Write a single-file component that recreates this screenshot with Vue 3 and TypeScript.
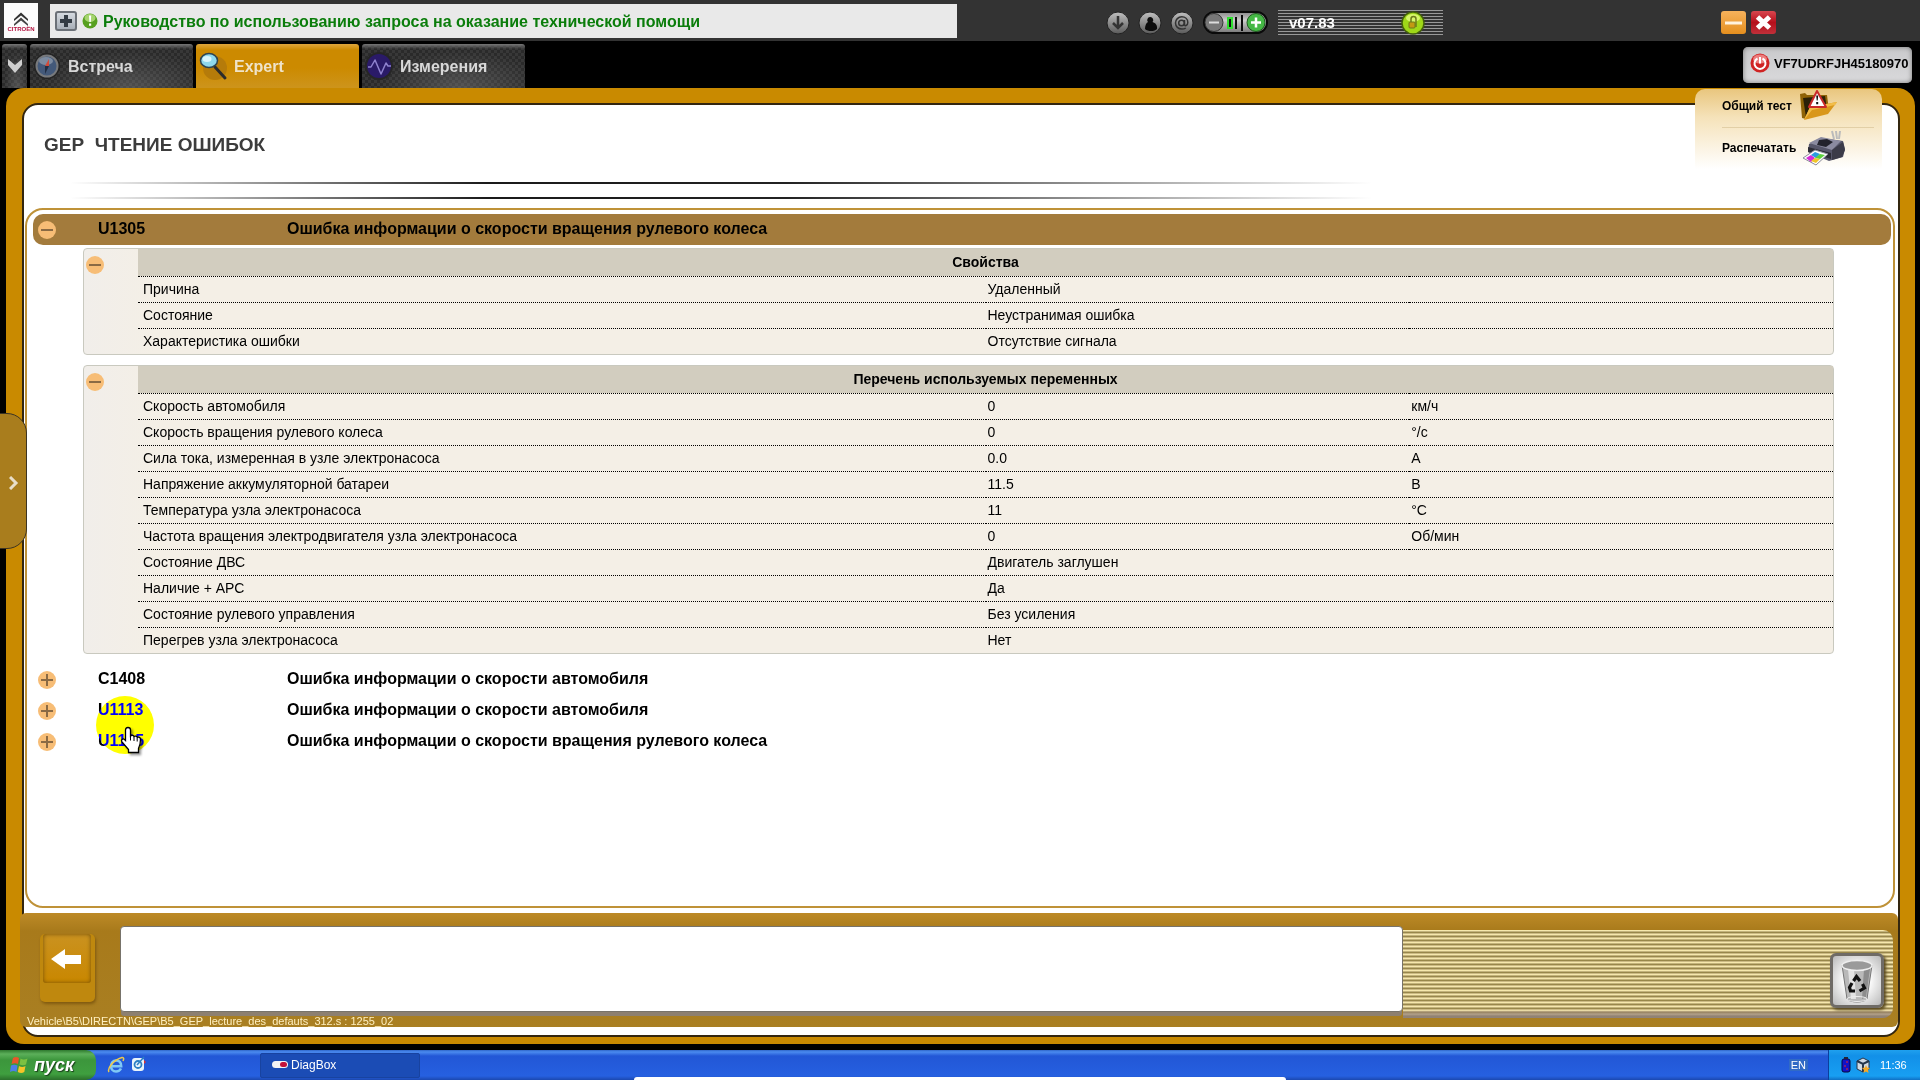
<script setup lang="ts">
import { ref } from 'vue'

interface Variable {
  name: string
  value: string
  unit?: string
}
interface Group {
  title: string
  rows: Variable[]
}
interface Fault {
  code: string
  label: string
  open: boolean
  groups: Group[]
}
type TabIcon = 'compass' | 'magnifier' | 'wave'

const tabs: { label: string; icon: TabIcon }[] = [
  { label: 'Встреча', icon: 'compass' },
  { label: 'Expert', icon: 'magnifier' },
  { label: 'Измерения', icon: 'wave' },
]
const activeTab = ref('Expert')

const faults = ref<Fault[]>([
  {
    code: 'U1305',
    label: 'Ошибка информации о скорости вращения рулевого колеса',
    open: true,
    groups: [
      {
        title: 'Свойства',
        rows: [
          { name: 'Причина', value: 'Удаленный' },
          { name: 'Состояние', value: 'Неустранимая ошибка' },
          { name: 'Характеристика ошибки', value: 'Отсутствие сигнала' },
        ],
      },
      {
        title: 'Перечень используемых переменных',
        rows: [
          { name: 'Скорость автомобиля', value: '0', unit: 'км/ч' },
          { name: 'Скорость вращения рулевого колеса', value: '0', unit: '°/с' },
          { name: 'Сила тока, измеренная в узле электронасоса', value: '0.0', unit: 'А' },
          { name: 'Напряжение аккумуляторной батареи', value: '11.5', unit: 'В' },
          { name: 'Температура узла электронасоса', value: '11', unit: '°C' },
          { name: 'Частота вращения электродвигателя узла электронасоса', value: '0', unit: 'Об/мин' },
          { name: 'Состояние ДВС', value: 'Двигатель заглушен' },
          { name: 'Наличие + АРС', value: 'Да' },
          { name: 'Состояние рулевого управления', value: 'Без усиления' },
          { name: 'Перегрев узла электронасоса', value: 'Нет' },
        ],
      },
    ],
  },
  { code: 'C1408', label: 'Ошибка информации о скорости автомобиля', open: false, groups: [] },
  { code: 'U1113', label: 'Ошибка информации о скорости автомобиля', open: false, groups: [] },
  { code: 'U1105', label: 'Ошибка информации о скорости вращения рулевого колеса', open: false, groups: [] },
])
</script>

<template>
  <div class="desktop">
    <header class="topbar">
      <div class="logo">
        <svg width="34" height="35" viewBox="0 0 34 35" aria-hidden="true">
          <path d="M10 16 L17 9.500 L24 16 L24 18 L17 12.500 L10 18 Z" fill="#333" />
          <path d="M10 21 L17 14.500 L24 21 L24 23 L17 17.500 L10 23 Z" fill="#444" />
        </svg>
        <span>CITROËN</span>
      </div>
      <div class="message">
        <button class="expand" aria-label="Развернуть">
          <svg width="14" height="14" viewBox="0 0 14 14"><path d="M5 1h4v4h4v4H9v4H5V9H1V5h4z" fill="#333b44" /></svg>
        </button>
        <svg width="16" height="16" viewBox="0 0 16 16" aria-hidden="true">
          <circle cx="8" cy="8" r="7.500" fill="#57a01f" />
          <ellipse cx="8" cy="5" rx="5.500" ry="4" fill="#a5d46e" />
          <path d="M7 2.500h2.200L8.800 9H7.400zM7 10.500h2.200v2.200H7z" fill="#fff" />
        </svg>
        <a href="#">Руководство по использованию запроса на оказание технической помощи</a>
      </div>
      <div class="status">
        <button class="ball" aria-label="Загрузка">
          <svg width="24" height="24" viewBox="0 0 24 24">
            <circle cx="12" cy="12" r="11" fill="url(#grey)" stroke="#222" />
            <path d="M12 5v11M7 12l5 5 5-5" fill="none" stroke="#333" stroke-width="2.500" />
          </svg>
        </button>
        <button class="ball" aria-label="Пользователь">
          <svg width="24" height="24" viewBox="0 0 24 24">
            <circle cx="12" cy="12" r="11" fill="url(#grey)" stroke="#222" />
            <path d="M12 6a3 3 0 0 1 2.500 5c3 1 5 3 4.500 7-2 2.500-9 3-12 0 0-3 1-6 3-7A3 3 0 0 1 12 6z" fill="#0c0c0c" />
          </svg>
        </button>
        <button class="ball" aria-label="Почта">
          <svg width="24" height="24" viewBox="0 0 24 24">
            <circle cx="12" cy="12" r="11" fill="url(#grey)" stroke="#222" />
            <circle cx="11.500" cy="12" r="2.800" fill="none" stroke="#333" stroke-width="1.500" />
            <path d="M14.500 9v4.500c0 2 3.300 1.500 3.300-2 0-3.500-2.800-5.700-6-5.700-3.600 0-6.300 2.800-6.300 6.300s2.800 6 6.300 6c1.700 0 3-.4 4-1.100" fill="none" stroke="#333" stroke-width="1.500" />
          </svg>
        </button>
        <svg class="level" width="66" height="24" viewBox="0 0 66 24" role="img" aria-label="Уровень">
          <defs>
            <linearGradient id="grey" x1="0" y1="0" x2="0" y2="1">
              <stop offset="0" stop-color="#c0c0c0" /><stop offset="1" stop-color="#5a5a5a" />
            </linearGradient>
            <linearGradient id="silver" x1="0" y1="0" x2="0" y2="1">
              <stop offset="0" stop-color="#888" /><stop offset=".4" stop-color="#ccc" /><stop offset="1" stop-color="#777" />
            </linearGradient>
          </defs>
          <rect x="1" y="1" width="63" height="21" rx="10.500" fill="url(#silver)" stroke="#0a0a0a" stroke-width="2" />
          <circle cx="11" cy="11.500" r="9" fill="#777" stroke="#333" />
          <path d="M6 11.500h10" stroke="#ddd" stroke-width="2" />
          <rect x="25" y="7" width="4" height="10" fill="#111" stroke="#2fe02f" stroke-width="2" />
          <path d="M33 6v12M39 4v16" stroke="#0a0a0a" stroke-width="2" />
          <circle cx="53" cy="11.500" r="9" fill="#45b845" stroke="#1d5a1d" />
          <path d="M48 11.500h10M53 6.500v10" stroke="#fff" stroke-width="2.500" />
        </svg>
        <div class="version">
          <span>v07.83</span>
          <svg width="24" height="24" viewBox="0 0 24 24" aria-hidden="true">
            <circle cx="12" cy="12" r="11" fill="#9fd818" stroke="#44600c" stroke-width="1.500" />
            <ellipse cx="12" cy="7" rx="7" ry="4" fill="#d5f56a" />
            <path d="M10 11V8a2.500 2.500 0 0 1 5 0v8" fill="none" stroke="#6d7a1a" stroke-width="1.500" />
            <rect x="8" y="11" width="6" height="6" rx="1" fill="#c39a12" stroke="#6d7a1a" />
          </svg>
        </div>
      </div>
      <div class="window-buttons">
        <button class="minimize" aria-label="Свернуть">
          <svg width="25" height="23" viewBox="0 0 25 23"><path d="M4 10.500h17v3H4z" fill="#fff3df" /></svg>
        </button>
        <button class="close" aria-label="Закрыть">
          <svg width="25" height="23" viewBox="0 0 25 23"><path d="M6.500 6l12 11M18.500 6l-12 11" stroke="#fff" stroke-width="5" /></svg>
        </button>
      </div>
    </header>

    <div class="tabrow">
      <button class="tab more" aria-label="Ещё">
        <svg width="16" height="16" viewBox="0 0 16 16"><path d="M1 1l7 6 7-6v6l-7 8-7-8z" fill="#cfcfcf" /></svg>
      </button>
      <button
        v-for="tab in tabs"
        :key="tab.label"
        class="tab"
        :class="{ active: tab.label === activeTab }"
        @click="activeTab = tab.label"
      >
        <svg v-if="tab.icon === 'compass'" width="30" height="32" viewBox="0 0 30 32" aria-hidden="true">
          <circle cx="15" cy="16" r="13" fill="#242424" />
          <circle cx="15" cy="16" r="10.500" fill="#43597a" stroke="#77797c" stroke-width="2" />
          <ellipse cx="14" cy="11" rx="7" ry="4" fill="#7c8ba0" />
          <path d="M13 16l4-7v7z" fill="#d14a3a" /><path d="M17 16l-4 8v-8z" fill="#222f45" />
        </svg>
        <svg v-else-if="tab.icon === 'magnifier'" width="30" height="32" viewBox="0 0 30 32" aria-hidden="true">
          <circle cx="17" cy="18" r="12" fill="#b57b0a" />
          <path d="M17 17l10 11" stroke="#2b2b2b" stroke-width="3" stroke-linecap="round" />
          <ellipse cx="11" cy="10.500" rx="8.500" ry="7" fill="#8ed8ec" stroke="#2e4450" stroke-width="1.500" />
          <ellipse cx="9" cy="9" rx="4.500" ry="3" fill="#d9f6fb" />
        </svg>
        <svg v-else width="30" height="32" viewBox="0 0 30 32" aria-hidden="true">
          <circle cx="15" cy="16" r="14" fill="#262626" />
          <circle cx="15" cy="16" r="12" fill="#2a1a68" />
          <path d="M4 17h3l4-7 6 14 5-11 2 3h3" fill="none" stroke="#8f82cf" stroke-width="1.500" stroke-linejoin="round" />
        </svg>
        <span>{{ tab.label }}</span>
      </button>
      <button class="vin">
        <svg width="20" height="20" viewBox="0 0 20 20" aria-hidden="true">
          <circle cx="10" cy="10" r="9.500" fill="#cf2323" />
          <ellipse cx="10" cy="6" rx="7" ry="4.500" fill="#ec7d7d" />
          <path d="M7.500 5.500a5.500 5.500 0 1 0 5 0M10 4v6.500" fill="none" stroke="#fff" stroke-width="2" />
        </svg>
        <span>VF7UDRFJH45180970</span>
      </button>
    </div>

    <div class="frame">
      <main class="sheet">
        <div class="heading">
          <h1>GEP&nbsp; ЧТЕНИЕ ОШИБОК</h1>
          <div class="rules"></div>
        </div>

        <section class="panel">
          <div v-for="fault in faults" :key="fault.code" class="fault">
            <div class="fault-row" :class="{ open: fault.open }">
              <button class="toggle" :aria-label="fault.open ? 'Свернуть' : 'Развернуть'" :aria-expanded="fault.open" @click="fault.open = !fault.open">
                <svg width="18" height="18" viewBox="0 0 18 18">
                  <path :d="fault.open ? 'M3 9h12' : 'M3 9h12M9 3v12'" stroke="#8a6a44" stroke-width="2" />
                </svg>
              </button>
              <span class="code">{{ fault.code }}</span>
              <span>{{ fault.label }}</span>
            </div>
            <template v-if="fault.open">
              <div v-for="group in fault.groups" :key="group.title" class="group">
                <button class="toggle" aria-label="Свернуть">
                  <svg width="18" height="18" viewBox="0 0 18 18"><path d="M3 9h12" stroke="#8a6a44" stroke-width="2" /></svg>
                </button>
                <table>
                  <thead>
                    <tr><th colspan="3">{{ group.title }}</th></tr>
                  </thead>
                  <tbody>
                    <tr v-for="row in group.rows" :key="row.name">
                      <td class="name">{{ row.name }}</td>
                      <td class="value">{{ row.value }}</td>
                      <td>{{ row.unit }}</td>
                    </tr>
                  </tbody>
                </table>
              </div>
            </template>
          </div>
        </section>

        <footer class="dock">
          <div class="dock-main">
            <div class="back-well">
              <button class="back" aria-label="Назад">
                <svg width="30" height="20" viewBox="0 0 30 20"><path d="M0 10L14 0v6h16v9H14v5z" fill="#fff" /></svg>
              </button>
            </div>
            <div class="comment" role="status"></div>
            <div class="stripes">
              <button class="trash" aria-label="Очистить">
                <svg width="34" height="44" viewBox="0 0 34 44">
                  <path d="M2 6l5 34c3 4 17 4 20 0l5-34z" fill="#b9b9b9" stroke="#777" />
                  <path d="M8 10l3 30h5L14 10z" fill="#e3e3e3" />
                  <path d="M24 10l-2 30 4-2 4-28z" fill="#8d8d8d" />
                  <ellipse cx="17" cy="6.500" rx="15" ry="5" fill="#9a9a9a" stroke="#eee" stroke-width="1.500" />
                  <ellipse cx="17" cy="40" rx="10" ry="2.500" fill="none" stroke="#eee" />
                  <path d="M13.500 22l3-4.500 3.500 4.500M22.500 25l2 4-5 3M15 32h-4.500l-1-3.500 2.500-4.500" fill="none" stroke="#111" stroke-width="3.200" />
                </svg>
              </button>
            </div>
          </div>
          <div class="path">Vehicle\B5\DIRECTN\GEP\B5_GEP_lecture_des_defauts_312.s : 1255_02</div>
        </footer>
      </main>
    </div>

    <nav class="float-menu" aria-label="Действия">
      <a href="#">
        <span>Общий тест</span>
        <svg width="40" height="32" viewBox="0 0 40 32" aria-hidden="true">
          <path d="M2 4l5-1 2 2h20l2 16-23 8-4-1z" fill="#8f6307" />
          <path d="M5 8l22-2 2 14L8 27z" fill="#2b2108" />
          <path d="M6 30l6-13 27-5-9 12z" fill="#d9971b" />
          <path d="M6 30l6-13 27-5-2 3-23 5z" fill="#f2bd49" />
          <path d="M19 1l9 16H11z" fill="#fff" stroke="#c92a2a" stroke-width="2" stroke-linejoin="round" />
          <path d="M18.200 5.500h2l-.5 5h-1zM18.200 12h2v2.200h-2z" fill="#111" />
        </svg>
      </a>
      <a href="#">
        <span>Распечатать</span>
        <svg width="44" height="36" viewBox="0 0 44 36" aria-hidden="true">
          <path d="M30 1l2 8M34 1l1 8M38 1l-1 8" stroke="#bbb" stroke-width="2" />
          <path d="M7 14l12-6 22 3 2 8-2 8-14 4L6 22z" fill="#56566a" />
          <path d="M7 13l12-6 20 4-9 9z" fill="#8b8ba0" />
          <path d="M17 10l8-1 6 3-7 5-9-2z" fill="#23232d" />
          <path d="M6 17l23 6v6L6 22z" fill="#2c2c36" />
          <path d="M30 20l11-8 2 8-3 7-10 3z" fill="#3b3b48" />
          <path d="M1 28l12-8 13 4-12 11z" fill="#fff" stroke="#8a8a99" />
          <path d="M4 28l5-3 4 3-4 4z" fill="#d62bd6" />
          <path d="M9 25l4-3 5 2-4 4z" fill="#2b9be0" />
          <path d="M13 28l5-4 5 1-5 4z" fill="#5bcf3d" />
          <path d="M9 31l4-3 5 1-4 4z" fill="#f0c52a" />
        </svg>
      </a>
    </nav>

    <button class="drawer" aria-label="Открыть панель">
      <svg width="10" height="14" viewBox="0 0 10 14"><path d="M1 1l6 6-6 6" fill="none" stroke="#e8ddc8" stroke-width="3" /></svg>
    </button>

    <div class="halo"></div>
    <svg class="pointer" width="24" height="30" viewBox="0 0 24 30" aria-hidden="true">
      <path d="M8 1.500c1.800 0 2.500 1 2.500 2.500v6c1-1 3-.7 3.500.5 1.200-.8 2.700-.4 3.200.8 1.600-.6 3.300.2 3.300 2.200 0 5-1 7-2 9v4H8.500v-3L2 16c-1.500-2 .8-4 2.500-2.500l1 1V4c0-1.500.7-2.500 2.500-2.500z" fill="#fff" stroke="#000" stroke-width="1.300" />
      <path d="M10.500 10v4.500M14 11v4M17.200 12v3.500" stroke="#000" />
    </svg>

    <footer class="taskbar">
      <button class="start">
        <svg width="20" height="20" viewBox="0 0 20 20" aria-hidden="true">
          <path d="M3 3c2-1.200 4-1.200 6 0L8 9c-2-1-4-1-6.500 0z" fill="#e8562a" />
          <path d="M10.500 3.500c2 1.200 4.500 1.200 7 0L16 9.500c-2 1-4 1-6.500 0z" fill="#7cc142" />
          <path d="M1 10.500c2-1 4-1 6.500 0L6.500 17c-2-1.200-4-1.200-6.500 0z" fill="#4d7fe8" />
          <path d="M9 11c2 1.200 4.500 1.200 6.500 0l-1.200 6c-2 1.200-4 1.200-6.500 0z" fill="#f7c428" />
        </svg>
        <span>пуск</span>
      </button>
      <div class="quick">
        <button aria-label="Internet Explorer">
          <svg width="18" height="18" viewBox="0 0 18 18">
            <path d="M14 12.500c-1 2-2.700 3-5 3-3 0-5-2.200-5-5.500s2-5.500 5-5.500 5.200 2 5.200 5.700H5" fill="none" stroke="#7fc8f5" stroke-width="2.500" />
            <path d="M2 16C0 13 6 4 15 1.500c2-.3 2 1.500 1 3.500" fill="none" stroke="#efc94a" stroke-width="1.500" />
          </svg>
        </button>
        <button aria-label="Проводник">
          <svg width="16" height="18" viewBox="0 0 16 18">
            <rect x="1" y="2" width="12" height="13" rx="3" fill="#e9f4fb" />
            <circle cx="7" cy="8.500" r="3.500" fill="none" stroke="#2b7fc4" stroke-width="1.800" />
            <path d="M6 9l7-8" stroke="#2b7fc4" stroke-width="1.500" /><path d="M13 4l2 2-2 2z" fill="#d33" />
          </svg>
        </button>
      </div>
      <button class="task">
        <svg width="16" height="8" viewBox="0 0 16 8" aria-hidden="true">
          <rect width="16" height="7" rx="3.500" fill="#f4f4f4" /><rect x="8" y="1" width="7" height="5" rx="2.500" fill="#c2123a" />
        </svg>
        <span>DiagBox</span>
      </button>
      <span class="lang">EN</span>
      <div class="tray">
        <svg width="10" height="16" viewBox="0 0 10 16" aria-hidden="true">
          <rect x="1" y="2" width="8" height="13" rx="2" fill="#1212c8" stroke="#06063c" /><rect x="3" y="0" width="4" height="2" fill="#223" />
          <path d="M6 4v2M4 8v2M6 11v2" stroke="#e22" stroke-width="1" />
        </svg>
        <svg width="14" height="16" viewBox="0 0 14 16" aria-hidden="true">
          <path d="M1 4l6-3 6 3v8l-6 3-6-3z" fill="#cfd9e4" stroke="#24364c" />
          <path d="M1 4l6 3 6-3M7 7v8" fill="none" stroke="#24364c" stroke-width="2" />
          <path d="M10 8l1 2.500 3 .5-2 2 .5 3-2.500-1.500L7.500 16l.5-3-2-2 3-.5z" fill="#f4a926" />
        </svg>
        <span>11:36</span>
      </div>
      <div class="popup-edge"></div>
    </footer>
  </div>
</template>

<style>
html,
body {
  background: #000;
}
</style>

<style scoped>
.desktop {
  position: relative;
  display: flex;
  flex-direction: column;
  min-height: 100vh;
  background: #000;
  color: #000;
  font-family: "Liberation Sans", Arial, sans-serif;
}
.desktop * {
  box-sizing: border-box;
}
button {
  display: flex;
  align-items: center;
  padding: 0;
  border: 0;
  background: none;
  font-family: inherit;
  cursor: pointer;
}
svg {
  flex: none;
  display: block;
}
a {
  color: inherit;
  text-decoration: none;
}

/* Top bar */
.topbar {
  display: flex;
  align-items: center;
  height: 41px;
  padding: 0 4px;
  background: #333;
}
.logo {
  display: grid;
  justify-items: center;
  width: 34px;
  height: 35px;
  background: #fcfcfc;
}
.logo svg,
.logo span {
  grid-area: 1 / 1;
}
.logo span {
  align-self: end;
  margin-bottom: 5px;
  color: #b3123f;
  font-size: 6px;
  font-weight: bold;
  line-height: 8px;
}
.message {
  display: flex;
  align-items: center;
  gap: 5px;
  width: 48%;
  max-width: 907px;
  height: 34px;
  margin-left: 12px;
  padding-left: 5px;
  background: #e9e9e9;
  color: #0b7d0b;
  font-size: 16px;
  font-weight: bold;
  white-space: nowrap;
}
.message a {
  padding-top: 2px;
}
.expand {
  justify-content: center;
  width: 22px;
  height: 20px;
  border: 2px solid #6b7077;
  border-radius: 3px;
  background: linear-gradient(#d4d9df, #a8afb8);
}
.status {
  display: flex;
  align-items: center;
  gap: 8px;
  margin-left: 149px;
  padding-top: 4px;
}
.level {
  margin-left: 1px;
}
.version {
  display: flex;
  align-items: center;
  justify-content: space-between;
  width: 165px;
  height: 25px;
  margin-left: 1px;
  padding: 0 18px 0 11px;
  background: repeating-linear-gradient(#999 0 1px, #333 1px 3px);
  color: #fff;
  font-size: 15px;
  font-weight: bold;
}
.window-buttons {
  display: flex;
  gap: 5px;
  margin-left: auto;
  margin-right: 140px;
  padding-top: 4px;
}
.minimize,
.close {
  border-radius: 3px;
}
.minimize {
  background: linear-gradient(#f6b25c, #e58f1e);
}
.close {
  background: linear-gradient(#d8474f, #b50f1b 50%, #c0303a);
}

/* Tabs */
.tabrow {
  display: flex;
  align-items: flex-end;
  gap: 3px;
  height: 47px;
  padding: 0 8px 0 2px;
}
.tab {
  width: 163px;
  height: 44px;
  padding-left: 2px;
  gap: 6px;
  border-radius: 3px 3px 0 0;
  background:
    radial-gradient(ellipse at 60% 100%, #8886 0, transparent 60%),
    linear-gradient(#777 0, transparent 5px),
    repeating-conic-gradient(#2a2a2a 0 25%, #383838 0 50%) 0 0 / 6px 6px;
  color: #d8d8d8;
  font-size: 16px;
  font-weight: bold;
}
.tab span {
  padding-top: 2px;
}
.tab.more {
  justify-content: center;
  width: 25px;
  padding: 0;
}
.tab.active {
  background: linear-gradient(#dfa63c 0, #cc8a00 6px, #cc8a00 24px, #cd941c);
  color: #efe3c8;
}
.vin {
  gap: 4px;
  width: 169px;
  height: 36px;
  margin-bottom: 5px;
  margin-left: auto;
  padding: 0 0 4px 7px;
  border-radius: 5px;
  background: linear-gradient(#c9c9cb, #d9d9db);
  box-shadow: inset 0 0 5px #777;
  font-size: 13px;
  font-weight: bold;
}

/* Working area */
.frame {
  flex: 1;
  display: flex;
  margin: 0 5px 6px 6px;
  padding: 15px 15px 7px 16px;
  border-radius: 18px;
  background: #c98a00;
}
.sheet {
  flex: 1;
  display: flex;
  flex-direction: column;
  border: 2px solid #33260f;
  border-radius: 16px;
  background: #fff;
}
.heading {
  height: 103px;
  padding: 29px 20px 0;
}
h1 {
  margin: 0;
  color: #3c3c3c;
  font-size: 19px;
  line-height: 22px;
}
.rules {
  width: 71%;
  height: 17px;
  margin: 26px 0 0 26px;
  border-style: solid;
  border-width: 2px 0;
  border-image: linear-gradient(90deg, #0000, #1a1a1a 32%, #222 55%, #0000) 2 0;
}
.panel {
  flex: 1;
  margin: 0 3px 5px 1px;
  padding: 4px 2px 0 6px;
  border: 2px solid #bf9238;
  border-radius: 18px;
}
.fault-row {
  display: flex;
  align-items: center;
  height: 31px;
  padding-left: 5px;
  border-radius: 10px;
  font-size: 16px;
  font-weight: bold;
}
.fault-row span {
  padding-bottom: 2px;
}
.fault-row.open {
  background: #a37b3c;
}
.code {
  width: 189px;
  margin-left: 42px;
}
.toggle {
  width: 18px;
  height: 18px;
  border-radius: 9px;
  background: #f7bd76;
}
.group {
  display: flex;
  margin: 3px 57px 10px 50px;
  border: 1px solid #c9c9bf;
  border-radius: 4px;
  background: linear-gradient(90deg, #f1eeea, #f4efe6 4%);
}
.group .toggle {
  margin: 7px 34px 0 2px;
}
table {
  flex: 1;
  table-layout: fixed;
  border-collapse: collapse;
  font-size: 14px;
}
th {
  height: 27px;
  padding: 0;
  background: #d2cdbf;
}
td {
  height: 26px;
  padding: 0 2px;
  border-top: 1px dotted #000;
}
.name {
  width: 50%;
  padding-left: 5px;
}
.value {
  width: 25%;
}

/* Lower dock */
.dock {
  height: 114px;
  margin: 0 0 8px -4px;
  border-radius: 6px;
  background: linear-gradient(#bd8a27, #a87a1b 18px, #a97f22);
}
.dock-main {
  display: flex;
  height: 104px;
  padding: 13px 5px 0 20px;
}
.back-well {
  width: 55px;
  height: 68px;
  margin: 8px 25px 0 0;
  padding: 0 3px;
  border-radius: 5px;
  background: #bf880e;
  box-shadow: 1px 2px 3px #805a10;
}
.back {
  justify-content: center;
  width: 48px;
  height: 49px;
  padding-right: 2px;
  border-radius: 3px;
  background: linear-gradient(#ca9220, #c98700);
  box-shadow: inset 0 0 4px #714e08;
}
.comment {
  flex: 1;
  height: 86px;
  border: 1px solid #77736a;
  border-radius: 4px;
  background: #fff;
  box-shadow: 0 5px 0 -1px #8d8070;
}
.stripes {
  display: flex;
  justify-content: flex-end;
  width: 490px;
  height: 88px;
  margin-top: 4px;
  padding: 23px 9px 0 0;
  border-radius: 0 10px 10px 0;
  background:
    linear-gradient(transparent 80px, #a08a7899 82px, #8d8078 88px),
    repeating-linear-gradient(#f6e8ac 0 1px, #c3b27c 1px 2px, #98874a 2px 3px, #ccba85 3px 4px);
}
.trash {
  justify-content: center;
  width: 54px;
  height: 55px;
  border: 3px solid #6f6b66;
  border-radius: 6px;
  background: radial-gradient(#fff 35%, #b9b9b9);
  box-shadow: 2px 2px 3px #5a4a20;
}
.path {
  padding-left: 7px;
  margin-top: -3px;
  color: #fff0c0;
  font-size: 11px;
  line-height: 14px;
}

/* Overlays */
.float-menu {
  position: absolute;
  top: 89px;
  right: 38px;
  width: 187px;
  height: 80px;
  padding: 0 8px 0 27px;
  border-radius: 10px 10px 0 0;
  background: linear-gradient(#e9c67e, #f5e2b9 35%, #fff0);
  font-size: 12px;
  font-weight: bold;
}
.float-menu a {
  display: flex;
  align-items: center;
  gap: 6px;
  height: 34px;
}
.float-menu a + a {
  height: 40px;
  margin-top: 4px;
  border-top: 1px solid #e2cfa6;
}
.drawer {
  position: absolute;
  top: 413px;
  left: -1px;
  justify-content: flex-end;
  width: 28px;
  height: 136px;
  padding: 4px 7px 0 0;
  border: 1px solid #3c3423;
  border-radius: 0 20px 20px 0;
  background: #a97d1d;
}
.halo {
  position: absolute;
  top: 696px;
  left: 96px;
  width: 58px;
  height: 58px;
  border-radius: 50%;
  /* Turns white into yellow and black text into blue */
  background: #00f;
  mix-blend-mode: difference;
  pointer-events: none;
}
.pointer {
  position: absolute;
  top: 726px;
  left: 120px;
  filter: drop-shadow(2px 2px 1px #0006);
}

/* Taskbar */
.taskbar {
  position: relative;
  display: flex;
  align-items: center;
  height: 30px;
  background: linear-gradient(#2f66c9 0, #4b8bf0 2px, #2257d6 6px, #2660e0 26px, #1b48b0);
  color: #fff;
  font-size: 12px;
}
.start {
  gap: 4px;
  width: 96px;
  height: 30px;
  padding-left: 10px;
  border-radius: 0 10px 10px 0;
  background: linear-gradient(#2f7a2f, #5cb05a 4px, #3c963c 10px, #3f9f3f 24px, #2b6f2b);
  color: #fff;
  font-size: 18px;
  font-style: italic;
  font-weight: bold;
  text-shadow: 1px 1px 1px #1a3f1a;
}
.quick {
  display: flex;
  gap: 6px;
  margin-left: 11px;
}
.task {
  gap: 3px;
  width: 160px;
  height: 25px;
  margin-left: 113px;
  padding-left: 11px;
  border: 1px solid #1843a0;
  border-radius: 2px;
  background: #1b4cb5;
  color: #fff;
  font-size: 12px;
}
.lang {
  margin-left: auto;
  margin-right: 20px;
  padding: 0 2px;
  background: #316ac5;
  font-size: 11px;
}
.tray {
  display: flex;
  align-items: center;
  gap: 5px;
  width: 92px;
  height: 30px;
  padding-left: 12px;
  border-left: 1px solid #0b3f9e;
  background: linear-gradient(#1fa0ee, #1290e8 6px, #189ff2 26px, #0f70c4);
}
.tray span {
  margin-left: 5px;
  font-size: 11px;
}
.popup-edge {
  position: absolute;
  bottom: 0;
  left: 33%;
  width: 34%;
  height: 3px;
  border-radius: 3px 3px 0 0;
  background: #fff;
}
</style>
